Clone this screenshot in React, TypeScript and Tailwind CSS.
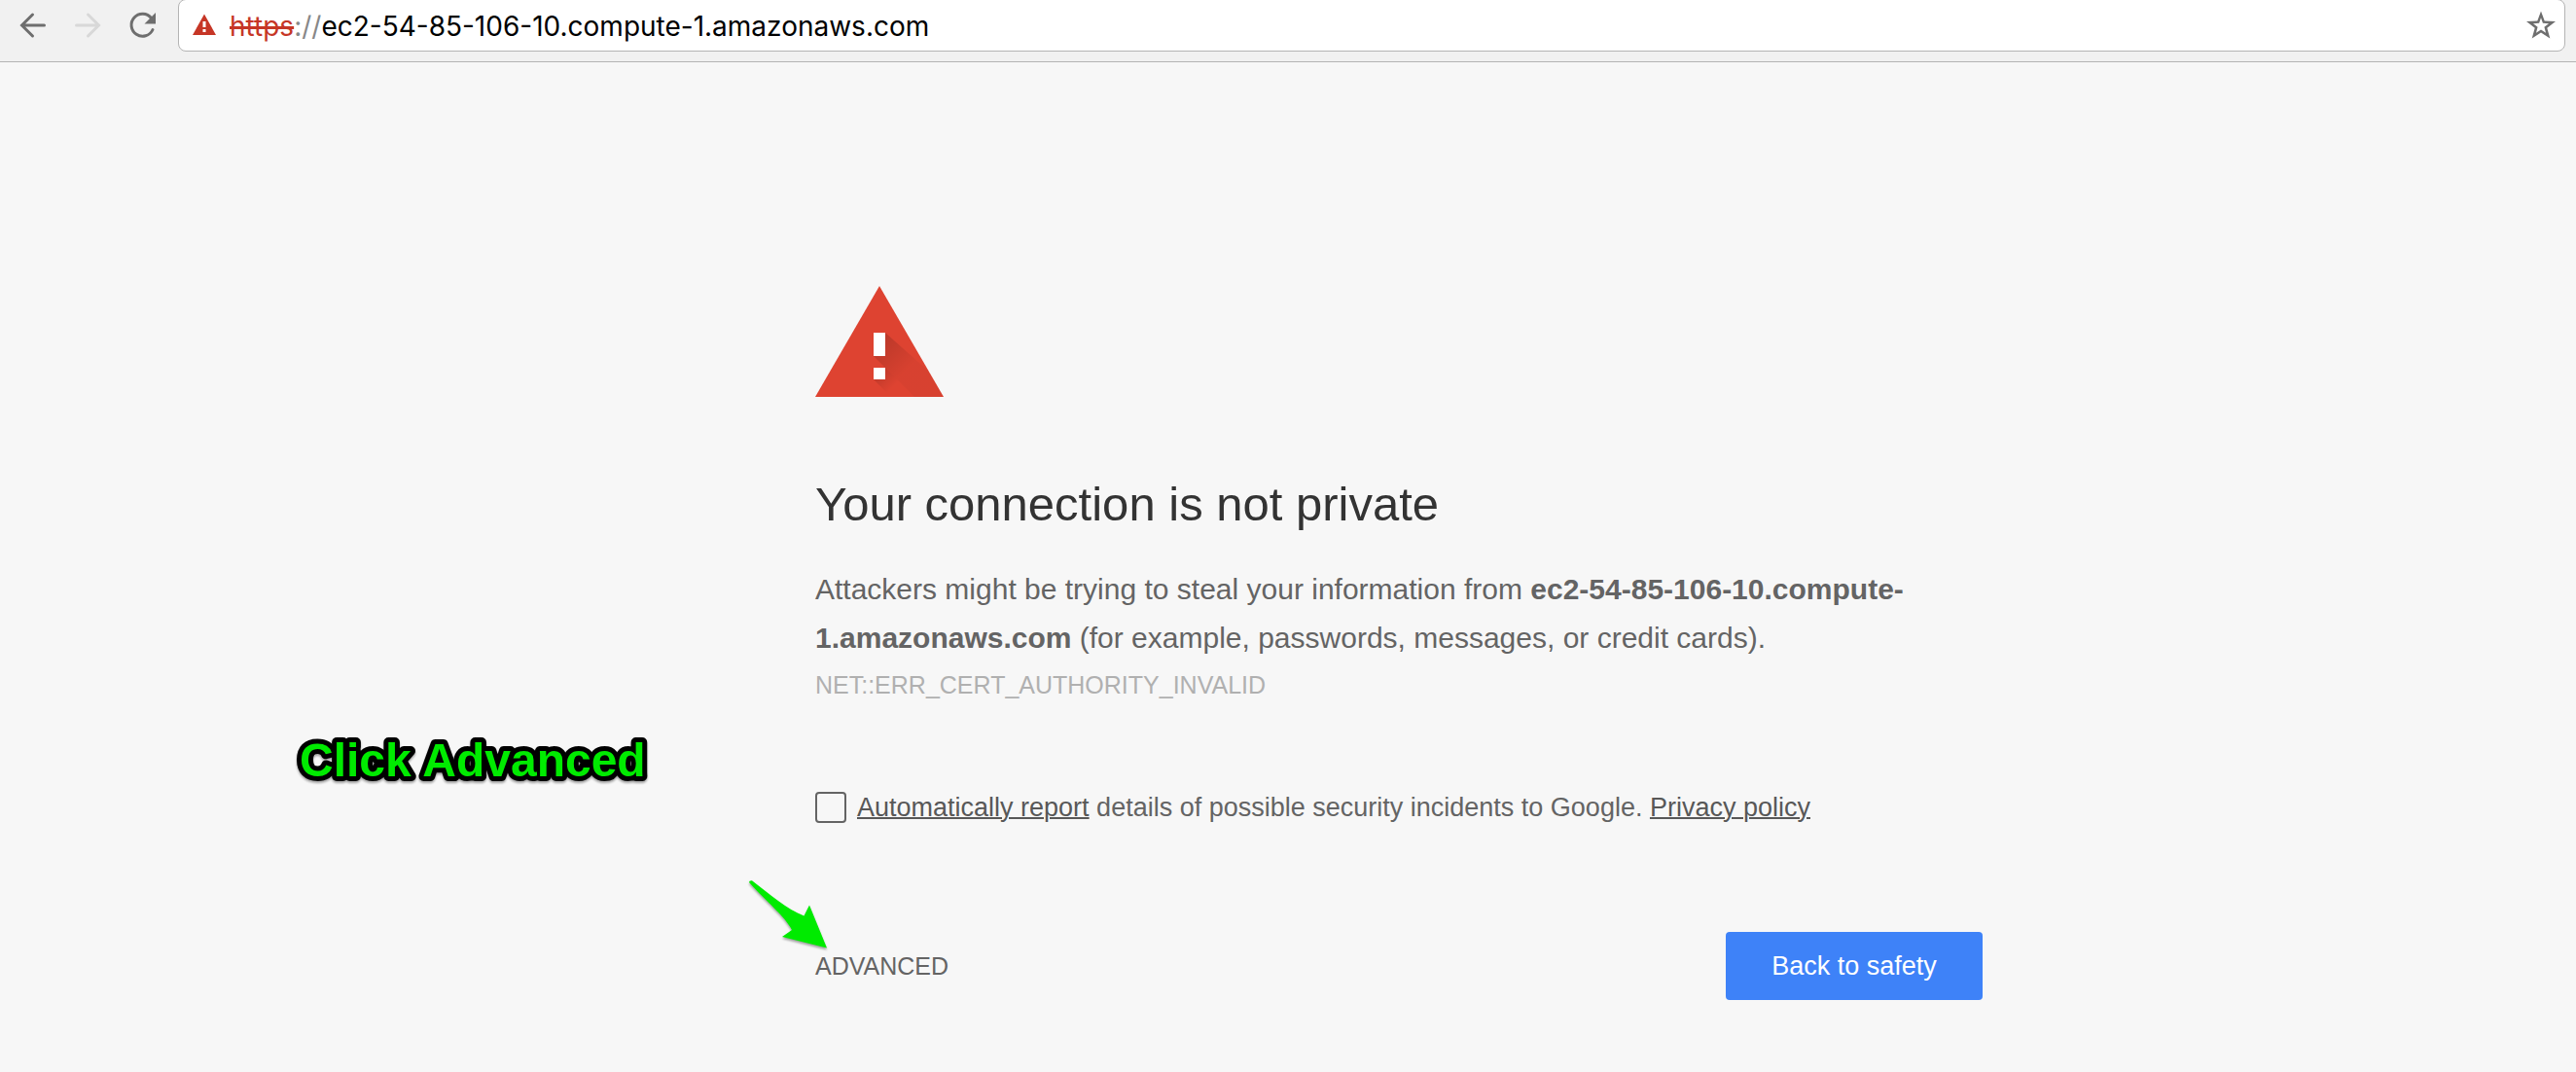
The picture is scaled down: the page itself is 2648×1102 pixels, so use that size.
import React from "react";

const sans = "font-['Liberation_Sans',Arial,sans-serif]";

function BackIcon() {
  return (
    <svg className="h-8 w-8" viewBox="0 0 32 32" fill="none" stroke="#6e6e6e" strokeWidth="3" aria-hidden="true">
      <path d="M27.5 16H5M15.5 5 4.5 16 15.5 27" strokeLinecap="round" />
    </svg>
  );
}

function ForwardIcon() {
  return (
    <svg className="h-8 w-8" viewBox="0 0 32 32" fill="none" stroke="#d8d8d8" strokeWidth="3" aria-hidden="true">
      <path d="M4.5 16H27M16.5 5 27.5 16 16.5 27" strokeLinecap="round" />
    </svg>
  );
}

function ReloadIcon() {
  return (
    <svg className="h-8 w-8" viewBox="0 0 32 32" fill="none" aria-hidden="true">
      <path d="M25.5 8.5A11.5 11.5 0 1 0 27 20.5" stroke="#6e6e6e" strokeWidth="3" strokeLinecap="round" />
      <path d="M30 3V14.5H18.5Z" fill="#6e6e6e" />
    </svg>
  );
}

function InsecureIcon() {
  return (
    <svg className="h-6 w-6" viewBox="0 0 24 24" aria-hidden="true">
      <path d="M12 0.5 24 22H0Z" fill="#c63626" />
      <path d="M10.5 8h3v6h-3zM10.5 16h3v3h-3z" fill="#fff" />
    </svg>
  );
}

function StarIcon() {
  return (
    <svg className="h-8 w-8" viewBox="0 0 32 32" aria-hidden="true">
      <path
        fillRule="evenodd"
        fill="#6e6e6e"
        d="M16 1.5 19.7 11.4 31 12 22.3 18.8 25.3 29.5 16 23.6 6.7 29.5 9.7 18.8 1 12 12.3 11.4ZM16 8.3 14.1 13.8 8 14.2 12.6 17.8 11 23.7 16 20.5 21 23.7 19.4 17.8 24 14.2 17.9 13.8Z"
      />
    </svg>
  );
}

function WarningTriangle() {
  return (
    <svg className="block h-[114px] w-[132px]" viewBox="0 0 132 114" role="img" aria-label="Warning">
      <defs>
        <linearGradient id="barShade" gradientUnits="userSpaceOnUse" x1="66" y1="60" x2="93" y2="87">
          <stop offset="0" stopColor="#000" stopOpacity="0.15" />
          <stop offset="1" stopColor="#000" stopOpacity="0.03" />
        </linearGradient>
        <linearGradient id="dotShade" gradientUnits="userSpaceOnUse" x1="66" y1="90" x2="80" y2="104">
          <stop offset="0" stopColor="#000" stopOpacity="0.13" />
          <stop offset="1" stopColor="#000" stopOpacity="0" />
        </linearGradient>
      </defs>
      <path d="M66 0 132 114H0Z" fill="#de4331" />
      <path d="M72 48 116 87 132 114H102L60 72Z" fill="url(#barShade)" />
      <path d="M72 84 102 114H78L60 96Z" fill="url(#dotShade)" />
      <path d="M60 48h12v24H60zM60 84h12v12H60z" fill="#fff" />
    </svg>
  );
}

function PointerArrow() {
  return (
    <svg
      className="pointer-events-none absolute -top-[74px] -left-[69px] h-[72px] w-[84px] drop-shadow-[0_2px_1px_rgba(0,0,0,0.35)]"
      viewBox="0 0 84 72"
      aria-hidden="true"
    >
      <path d="M1 3Q1 1 4 1.3C22 15 40 31 57.5 37.5L63 26.5 81 70.5 35 59 45 52C38 38 18 22 1 3Z" fill="#00eb00" />
    </svg>
  );
}

function Callout() {
  return (
    <svg
      className="absolute top-[748px] left-[300px] h-[68px] w-[372px] drop-shadow-[0_2px_1px_rgba(0,0,0,0.35)]"
      viewBox="0 0 372 68"
    >
      <text
        x="8"
        y="50"
        className="fill-[#00eb00] stroke-black stroke-[10px] text-[48px] font-bold [paint-order:stroke] [stroke-linejoin:round]"
      >
        Click Advanced
      </text>
    </svg>
  );
}

function Toolbar() {
  return (
    <header className="flex h-16 items-start border-b border-[#b4b4b4] bg-[#f1f1f1] pr-[11px] pl-[18px]">
      <nav className="flex h-[51px] items-center gap-6 pr-[21px]">
        <button type="button" aria-label="Back"><BackIcon /></button>
        <button type="button" aria-label="Forward" disabled><ForwardIcon /></button>
        <button type="button" aria-label="Reload"><ReloadIcon /></button>
      </nav>
      <div className="-mt-px flex h-[54px] min-w-0 flex-1 items-center rounded-lg border border-[#b4b4b4] bg-white pr-2 pl-3.5">
        <InsecureIcon />
        <div className="min-w-0 flex-1 truncate pt-0.5 pl-3.5 font-[Inter,sans-serif] text-[28px] leading-10 text-black">
          <span className="text-[#c63626] line-through decoration-[3px]">https</span>
          <span className="text-[#888]">://</span>ec2-54-85-106-10.compute-1.amazonaws.com
        </div>
        <button type="button" aria-label="Bookmark this page"><StarIcon /></button>
      </div>
    </header>
  );
}

export default function App() {
  return (
    <div className={`relative min-h-screen bg-[#f7f7f7] text-[#646464] ${sans}`}>
      <Toolbar />
      <main className="pt-[230px] pb-[74px] pl-[228px]">
        <div className="mx-auto max-w-[1200px]">
          <WarningTriangle />
          <h1 className="mt-20 text-[49px] leading-[60px] text-[#333]">Your connection is not private</h1>
          <p className="mt-[33px] text-[30px] leading-[50px]">
            Attackers might be trying to steal your information from{" "}
            <strong>ec2-54-85-106-10.compute-1.amazonaws.com</strong> (for example, passwords, messages, or credit
            cards).
          </p>
          <p className="text-[25px] leading-[46px] text-[#b0b0b0]">NET::ERR_CERT_AUTHORITY_INVALID</p>
          <div className="mt-[83px] flex items-center gap-[11px] text-[27px] leading-10">
            <input
              id="report"
              type="checkbox"
              className="h-8 w-8 shrink-0 appearance-none rounded-sm border-2 border-[#646464] checked:bg-[#646464]"
            />
            <label htmlFor="report">
              <a href="#report" className="text-[#585858] underline decoration-2">Automatically report</a> details of
              possible security incidents to Google.{" "}
              <a href="#privacy" className="text-[#585858] underline decoration-2">Privacy policy</a>
            </label>
          </div>
          <div className="mt-[108px] flex items-center justify-between leading-[30px]">
            <div className="relative">
              <button type="button" className="block text-[25px]">ADVANCED</button>
              <PointerArrow />
            </div>
            <button type="button" className="h-[70px] w-[264px] rounded bg-[#3e82f8] text-[27px] text-white">
              Back to safety
            </button>
          </div>
        </div>
      </main>
      <Callout />
    </div>
  );
}
